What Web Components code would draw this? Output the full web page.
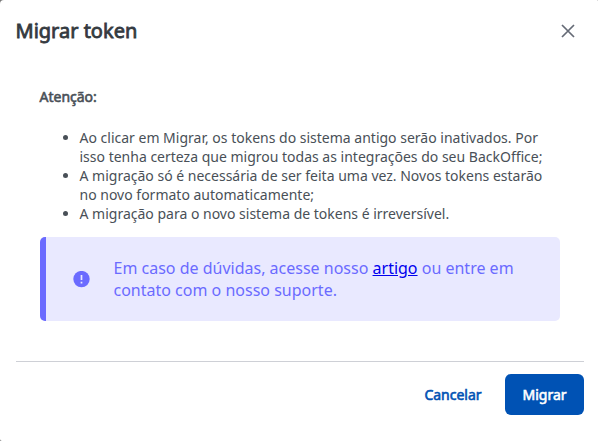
<!DOCTYPE html>
<html lang="pt-BR"><head><meta charset="utf-8"><title>Migrar token</title>
<style>
html,body{margin:0;height:100%;background:#777;overflow:hidden}
body{font-family:"Noto Sans",sans-serif;color:#495057}
p{margin:0 0 22px;font-weight:400;-webkit-text-stroke:.6px currentColor;font-size:14px;line-height:19px}
ul{margin:0 0 14px;padding:0 0 0 40px;font-size:14px;line-height:19px}
p,ul{position:relative;left:-.5px}
a{color:#0000ee}
</style></head><body>
<modal-dialog>
<span slot="title">Migrar token</span>
<p>Atenção:</p>
<ul><li>Ao clicar em Migrar, os tokens do sistema antigo serão inativados. Por<br>isso tenha certeza que migrou todas as integrações do seu BackOffice;</li><li>A migração só é necessária de ser feita uma vez. Novos tokens estarão<br>no novo formato automaticamente;</li><li>A migração para o novo sistema de tokens é irreversível.</li></ul>
<info-note>Em caso de dúvidas, acesse nosso <a href="#">artigo</a> ou entre em<br>contato com o nosso suporte.</info-note>
<action-button slot="actions">Cancelar</action-button>
<action-button slot="actions" primary>Migrar</action-button>
</modal-dialog>
<script>
class ModalDialog extends HTMLElement{constructor(){super();this.attachShadow({mode:'open'}).innerHTML=`<style>
:host{display:flex;flex-direction:column;box-sizing:border-box;height:441px;width:598px;background:#fff;border-radius:4px 1px 0 2px}
header{display:flex;justify-content:space-between;align-items:center;height:62px;padding:0 23px 0 15.5px;box-sizing:border-box}
h1{margin:0;font-size:20px;line-height:28px;font-weight:400;-webkit-text-stroke:.8px currentColor;color:#343a40}
svg{display:block}
main{padding:25px 38px 0 40px;height:299px;box-sizing:border-box}
footer{display:flex;justify-content:flex-end;margin:0 14px 0 16px;padding-top:12px;border-top:1px solid #ced0d6}
</style><header><h1><slot name="title"></slot></h1><svg width="14" height="14" viewBox="0 0 14 14"><path d="M1 1l12 12M13 1L1 13" fill="none" stroke="#656a76" stroke-width="1.7"/></svg></header><main><slot></slot></main><footer><slot name="actions"></slot></footer>`}}
class InfoNote extends HTMLElement{constructor(){super();this.attachShadow({mode:'open'}).innerHTML=`<style>
:host{display:flex;align-items:center;box-sizing:border-box;height:84px;border-left:6px solid #6b6bff;border-radius:5px;background:#e9e9ff;color:#6b6bff;font-size:16px;line-height:22px;padding-left:27px}
svg{margin-right:23.5px;flex:none}
</style><svg width="17" height="17" viewBox="0 0 17 17"><circle cx="8.5" cy="8.1" r="8.2" fill="#6b6bff"/><path d="M8.5 4v5M8.5 10.7v1.7" stroke="#e9e9ff" stroke-width="1.7"/></svg><div><slot></slot></div>`}}
class ActionButton extends HTMLElement{constructor(){super();this.attachShadow({mode:'open'}).innerHTML=`<style>
:host{display:block}
button{font:400 14px/20px "Noto Sans",sans-serif;-webkit-text-stroke:.6px currentColor;box-sizing:border-box;height:41px;width:104px;padding:0;border:0;border-radius:6px;background:none;color:#0052b4}
:host([primary]) button{width:79px;background:#0052b4;color:#fff}
</style><button><slot></slot></button>`}}
customElements.define('modal-dialog',ModalDialog);customElements.define('info-note',InfoNote);customElements.define('action-button',ActionButton);
</script></body></html>
